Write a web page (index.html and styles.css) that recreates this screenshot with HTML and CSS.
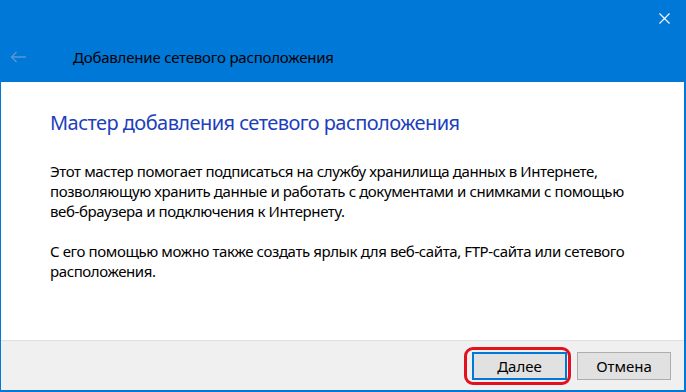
FILE: index.html
```html
<!DOCTYPE html>
<html lang="ru">
<head>
    <meta charset="UTF-8">
    <title>Добавление сетевого расположения</title>
    <link rel="stylesheet" href="styles.css">
</head>
<body>
    <div class="window">
        <div class="titlebar">
            <div class="close-row">
                <svg class="close-icon" width="11" height="11" viewBox="0 0 11 11">
                    <path d="M0.5 0.5 L10.5 10.5 M10.5 0.5 L0.5 10.5" stroke="#fff" stroke-width="1.1" fill="none"/>
                </svg>
            </div>
            <div class="nav-row">
                <svg class="back-icon" width="16" height="12" viewBox="0 0 16 12">
                    <path d="M16 6 H1.5 M6.5 1 L1.5 6 L6.5 11" stroke="#5a96d6" stroke-width="1.3" fill="none"/>
                </svg>
                <span class="window-title">Добавление сетевого расположения</span>
            </div>
        </div>

        <div class="content">
            <h1 class="main-title">Мастер добавления сетевого расположения</h1>
            <p class="text">Этот мастер помогает подписаться на службу хранилища данных в Интернете,<br>позволяющую хранить данные и работать с документами и снимками с помощью<br>веб-браузера и подключения к Интернету.</p>
            <p class="text">С его помощью можно также создать ярлык для веб-сайта, FTP-сайта или сетевого<br>расположения.</p>
        </div>

        <div class="footer">
            <div class="btn-wrap">
                <button class="btn default">Далее</button>
            </div>
            <button class="btn">Отмена</button>
        </div>
    </div>
</body>
</html>
```

FILE: styles.css
```css
* {
    margin: 0;
    padding: 0;
    box-sizing: border-box;
}

body {
    font-family: "Noto Sans", "Open Sans", sans-serif;
    background: #fff;
    color: #000;
}

.window {
    width: 686px;
    height: 392px;
    display: flex;
    flex-direction: column;
    border-left: 1px solid #0078d7;
    border-right: 2px solid #0078d7;
    border-bottom: 2px solid #0078d7;
}

.titlebar {
    height: 82px;
    background: #0078d7;
    margin-right: -2px;
    margin-left: -1px;
}

.close-row {
    display: flex;
    justify-content: flex-end;
    padding: 13px 16px 0 0;
    height: 47px;
}

.close-icon {
    display: block;
}

.nav-row {
    display: flex;
    align-items: center;
    height: 20px;
    padding-left: 10px;
}

.back-icon {
    display: block;
    margin-right: 47px;
}

.window-title {
    font-size: 15px;
    line-height: 20px;
    letter-spacing: -0.2px;
    white-space: nowrap;
}

.content {
    flex: 1;
    padding: 27px 0 0 49px;
}

.main-title {
    font-size: 20px;
    font-weight: normal;
    line-height: 27px;
    letter-spacing: -0.55px;
    color: #1c3fbd;
    white-space: nowrap;
    margin-bottom: 25px;
}

.text {
    font-size: 15px;
    line-height: 20px;
    letter-spacing: -0.4px;
    white-space: nowrap;
    margin-bottom: 20px;
}

.footer {
    height: 50px;
    background: #f0f0f0;
    border-top: 1px solid #dfdfdf;
    display: flex;
    justify-content: flex-end;
    align-items: center;
    gap: 10px;
    padding-right: 13px;
}

.btn-wrap {
    position: relative;
}

.btn-wrap::after {
    content: "";
    position: absolute;
    left: -8px;
    right: -4px;
    top: -5px;
    bottom: -5px;
    border: 3px solid #e3101d;
    border-radius: 9px;
}

.btn {
    display: block;
    width: 94px;
    height: 28px;
    background: #e1e1e1;
    border: 1px solid #adadad;
    font-family: inherit;
    font-size: 15px;
    color: #000;
}

.btn.default {
    width: 95px;
    border: 2px solid #0078d7;
}
```
